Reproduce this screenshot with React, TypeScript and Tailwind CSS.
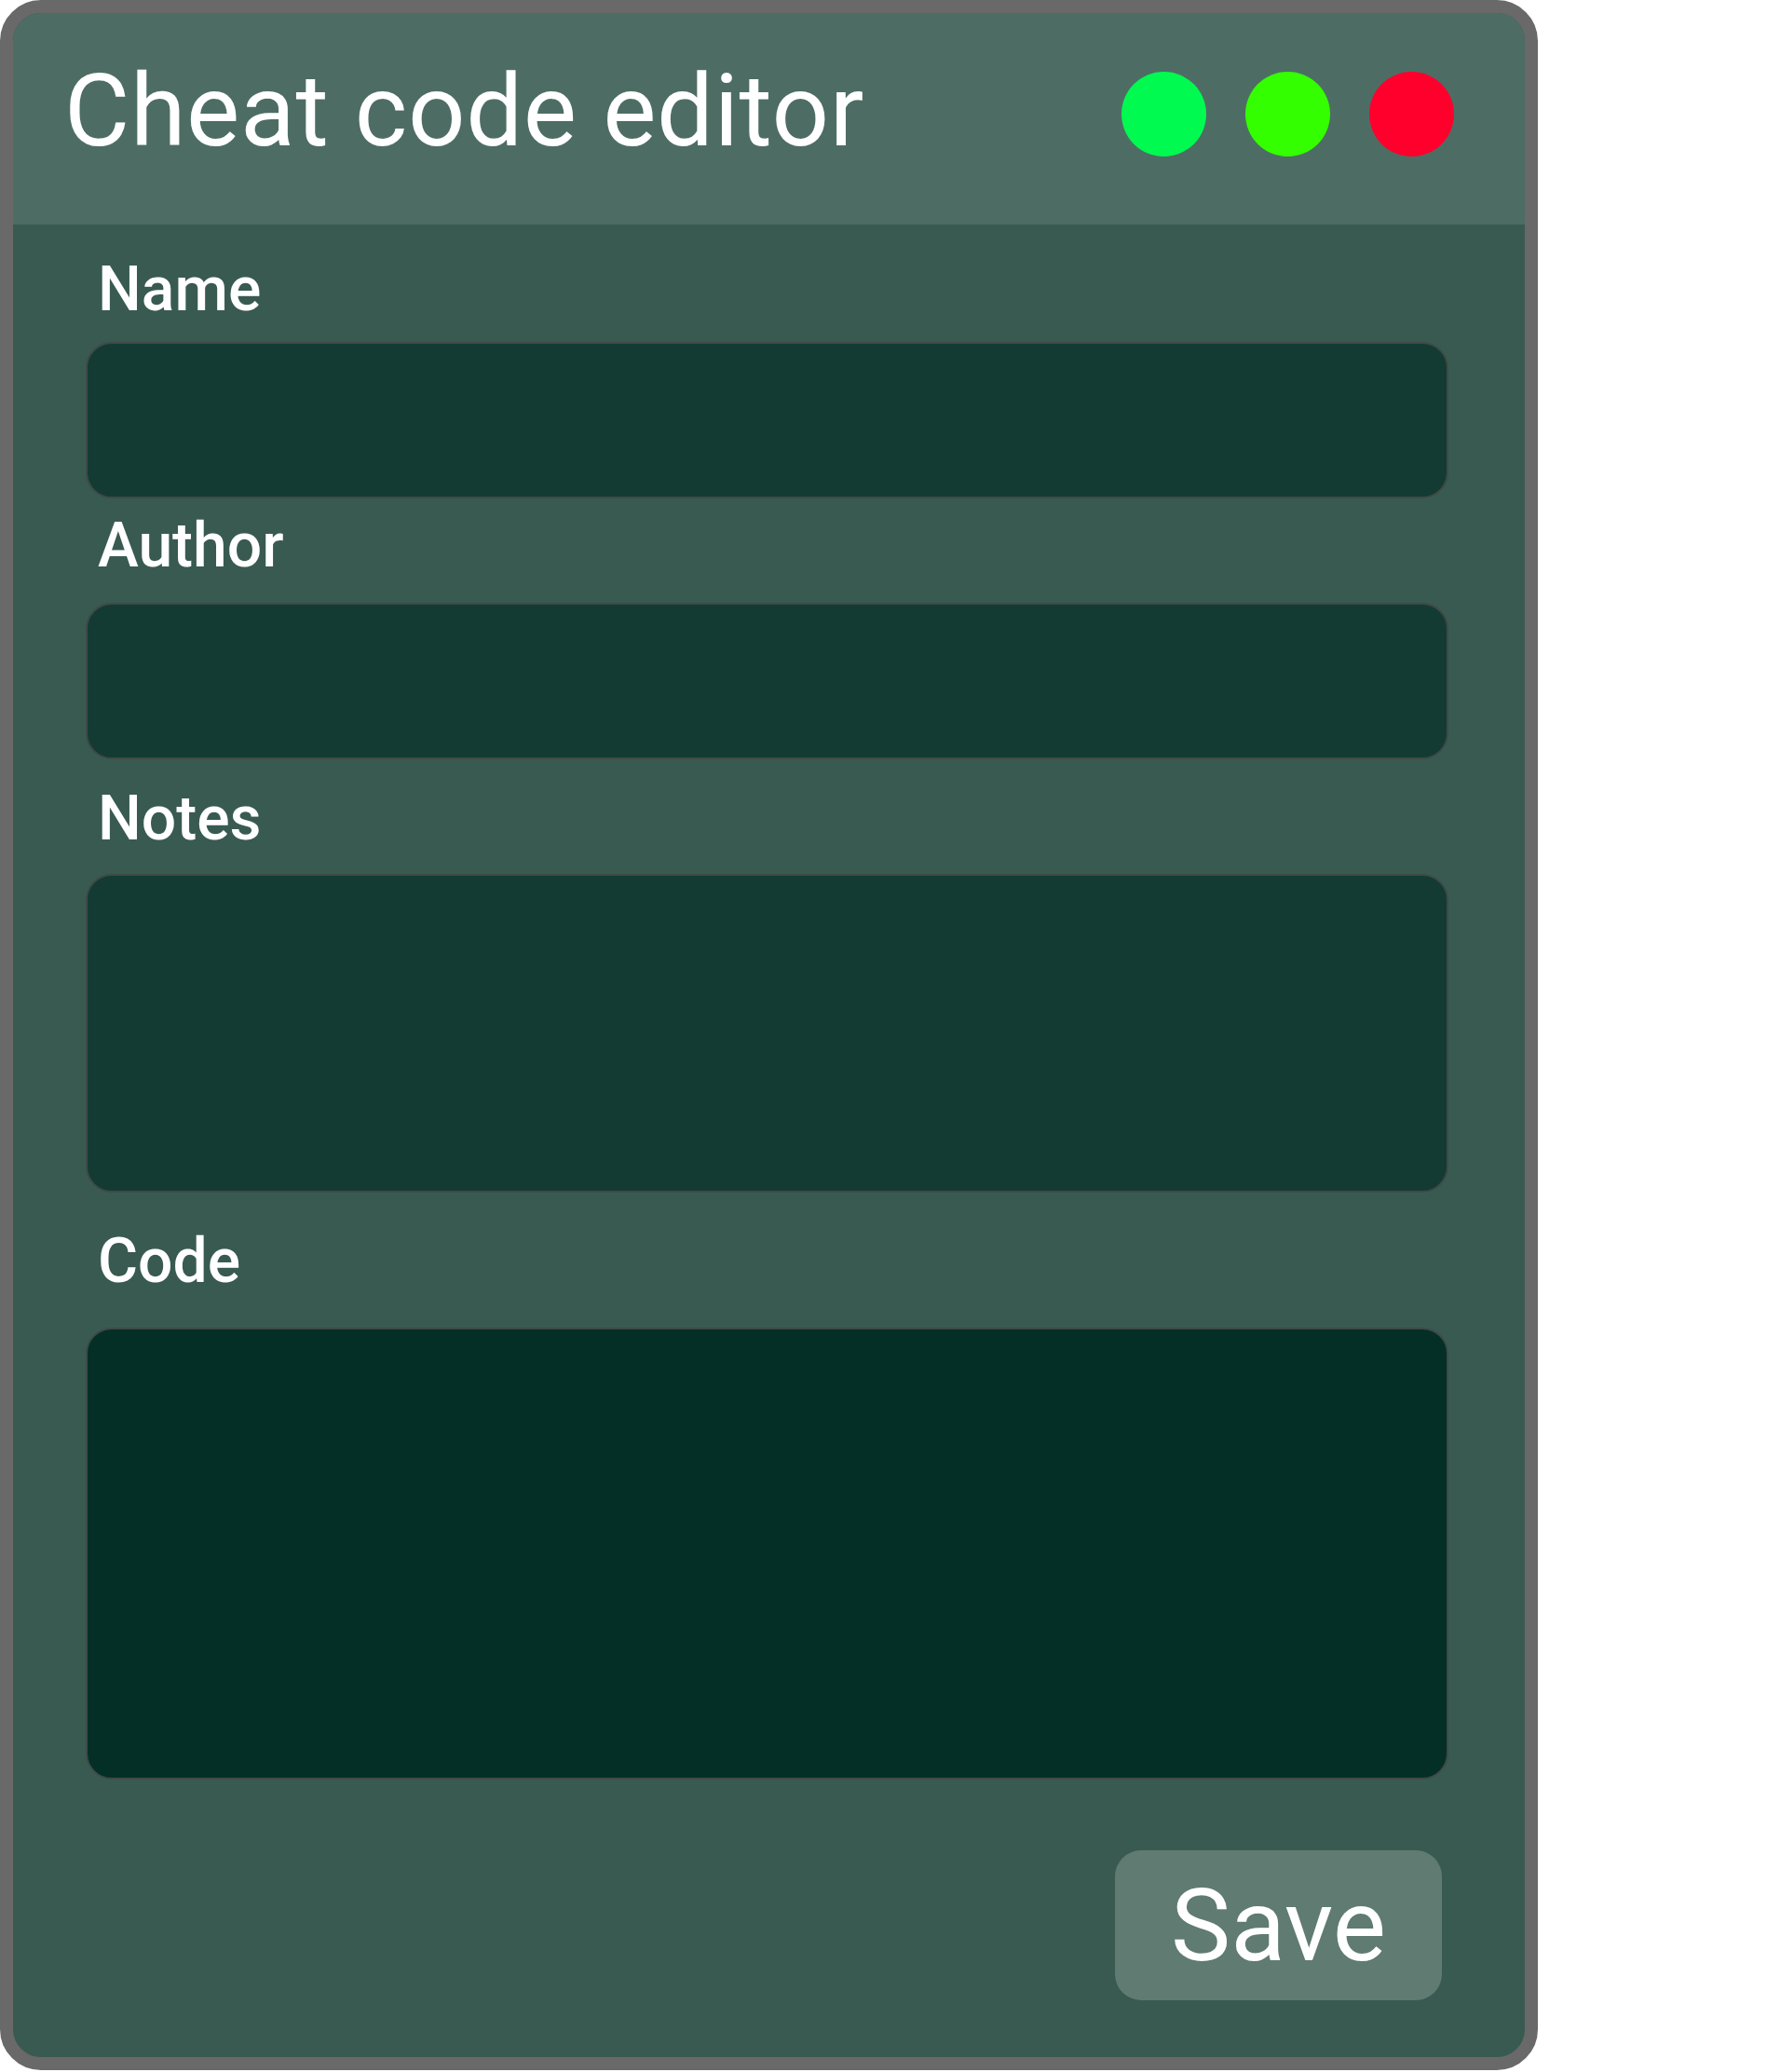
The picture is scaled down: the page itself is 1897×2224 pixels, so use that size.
import React from "react";

const font = { fontFamily: "Roboto, 'Noto Sans', sans-serif" };

// form field label
function Label({ text, className }: { text: string; className: string }) {
  return (
    <div className={`pl-[13px] text-[66px] font-medium leading-none text-white ${className}`}>
      {text}
    </div>
  );
}

export default function App() {
  return (
    <div className="bg-white min-h-screen" style={font}>
      <div className="w-[1651px] h-[2222px] rounded-[44px] border-[14px] border-[#696969] overflow-hidden bg-[#395a51] flex flex-col">
        {/* title bar */}
        <div className="h-[227px] shrink-0 bg-[#4d6d64] flex items-center justify-between pl-[55px] pr-[76px]">
          <h1 className="text-[108px] font-normal leading-none tracking-[0.65px] text-white pb-[17px]">
            Cheat code editor
          </h1>
          <div className="flex gap-[42px] mb-[11px]">
            <div className="w-[91px] h-[91px] rounded-full bg-[#00fa50]" />
            <div className="w-[91px] h-[91px] rounded-full bg-[#33ff00]" />
            <div className="w-[91px] h-[91px] rounded-full bg-[#ff002d]" />
          </div>
        </div>

        {/* form */}
        <div className="flex flex-col pt-[37px] pl-[78px] pr-[82px]">
          <Label text="Name" className="mb-[23px]" />
          <input className="h-[168px] rounded-[28px] border-2 border-[#3f4a46] bg-[#143b33] outline-none" />

          <Label text="Author" className="mt-[18px] mb-[28px]" />
          <input className="h-[168px] rounded-[28px] border-2 border-[#3f4a46] bg-[#143b33] outline-none" />

          <Label text="Notes" className="mt-[31px] mb-[26px]" />
          <textarea className="h-[342px] resize-none rounded-[28px] border-2 border-[#3f4a46] bg-[#143b33] outline-none" />

          <Label text="Code" className="mt-[41px] mb-[38px]" />
          <textarea className="h-[485px] resize-none rounded-[28px] border-2 border-[#3f4a46] bg-[#042f26] outline-none" />

          <div className="flex justify-end mt-[76px] pr-[7px]">
            <button className="w-[351px] h-[161px] rounded-[28px] bg-[#5f7b72] text-white text-[108px] font-normal leading-none flex items-center justify-center">
              Save
            </button>
          </div>
        </div>
      </div>
    </div>
  );
}
